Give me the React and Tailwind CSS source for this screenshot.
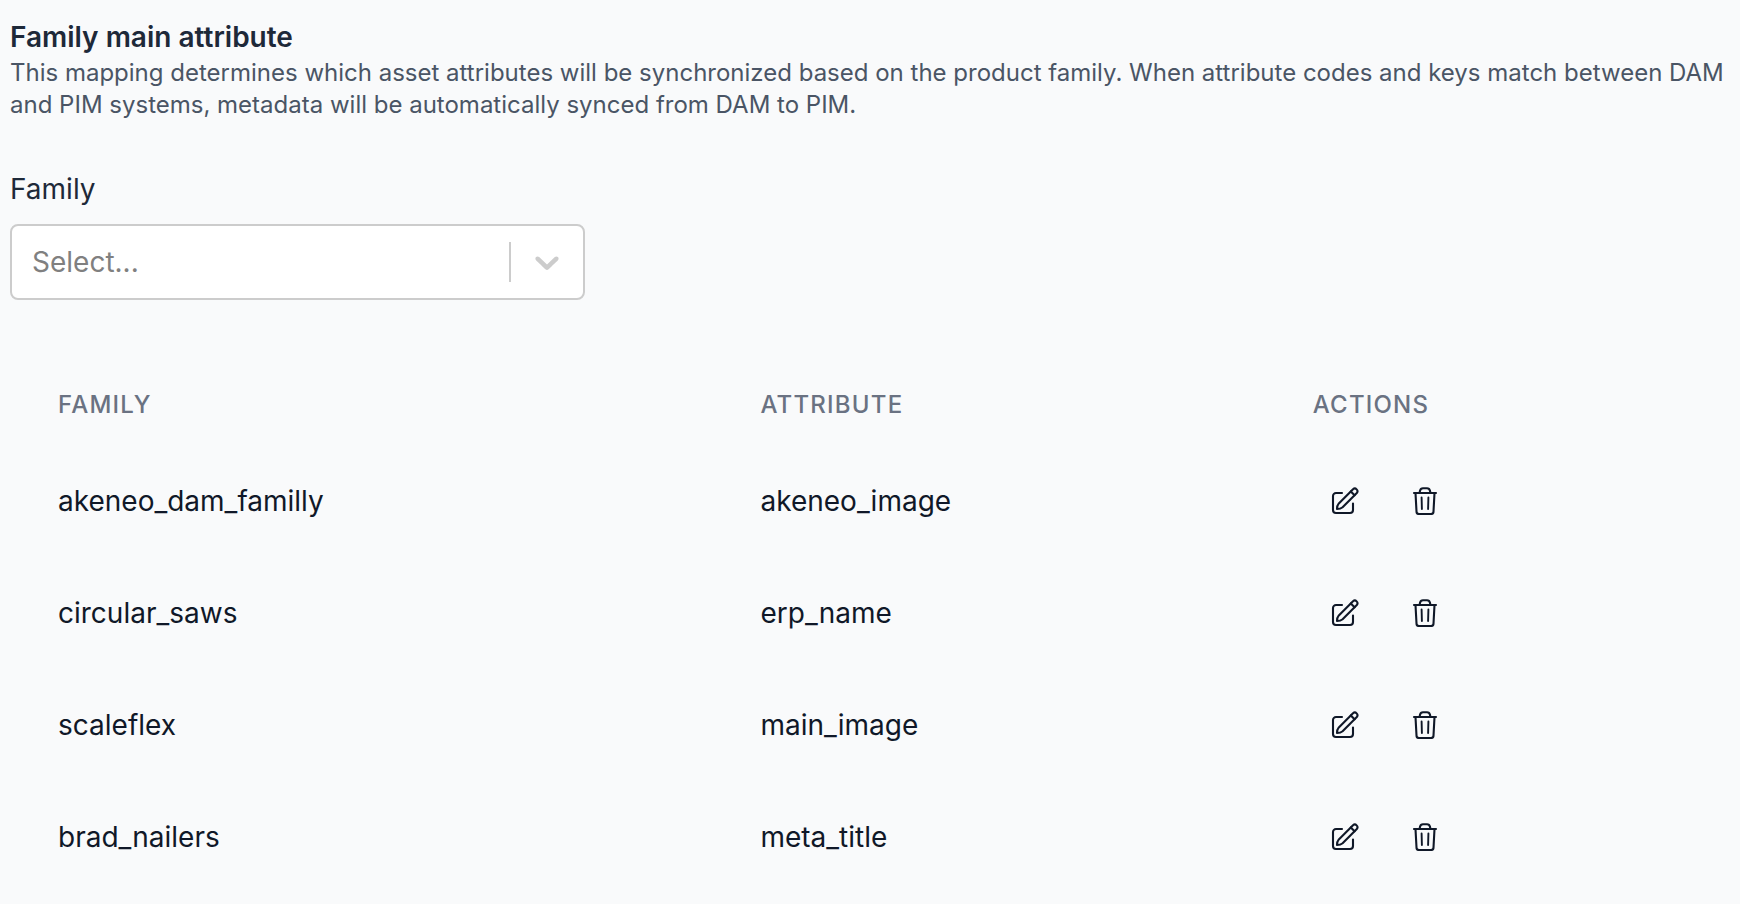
import React, { useState } from 'react';

const initialMappings = [
  { family: 'akeneo_dam_familly', attribute: 'akeneo_image' },
  { family: 'circular_saws', attribute: 'erp_name' },
  { family: 'scaleflex', attribute: 'main_image' },
  { family: 'brad_nailers', attribute: 'meta_title' }
];

function EditIcon() {
  return (
    <svg viewBox="0 0 28 28" className="h-7 w-7" fill="none" stroke="currentColor"
         strokeWidth="2.1" strokeLinecap="round" strokeLinejoin="round" aria-hidden="true">
      <path d="M11 6H5a3 3 0 0 0-3 3v14a3 3 0 0 0 3 3h14a3 3 0 0 0 3-3v-6.500" />
      <path d="M6 22c0-2 .4-4 1.800-5.600L22 2.200a2.700 2.700 0 0 1 3.800 3.800L11.600 20.200C10 21.600 8 22 6 22z" />
      <path d="M19.800 4.400l3.800 3.800" />
    </svg>
  );
}

function TrashIcon() {
  return (
    <svg viewBox="0 0 28 28" className="h-7 w-7" fill="none" stroke="currentColor"
         strokeWidth="2.1" strokeLinecap="round" strokeLinejoin="round" aria-hidden="true">
      <path d="M3 6h22" />
      <path d="M8.500 6l.6-2.400A3 3 0 0 1 12 1.200h4a3 3 0 0 1 2.900 2.400L19.500 6" />
      <path d="M4.500 6l1 18.500a2.500 2.500 0 0 0 2.500 2.500h12a2.500 2.500 0 0 0 2.500-2.500l1-18.500" />
      <path d="M10.600 10.500l.3 11.500M17.400 10.500l-.3 11.500" strokeWidth="1.900" />
    </svg>
  );
}

export default function App() {
  const [mappings, setMappings] = useState(initialMappings);
  const [selected, setSelected] = useState('');

  // Load a row's family back into the select
  const handleEdit = (family) => {
    setSelected(family);
  };

  const handleDelete = (family) => {
    setMappings(prev => prev.filter(m => m.family !== family));
  };

  return (
    <main className="min-h-screen bg-gray-50 pt-[21px] pr-1 pl-2.5 font-['Inter','Liberation_Sans',sans-serif] text-gray-900">
      <h1 className="text-[28px] leading-8 font-semibold text-gray-800">Family main attribute</h1>
      <p className="mt-1 text-[24px] leading-8 text-gray-600">
        This mapping determines which asset attributes will be synchronized based on the product
        family. When attribute codes and keys match between DAM and PIM systems, metadata will be
        automatically synced from DAM to PIM.
      </p>

      <label htmlFor="family" className="mt-12 block text-[28px] leading-10 text-gray-800">Family</label>
      <div className="relative mt-[15px] w-1/3">
        <select id="family" value={selected} onChange={e => setSelected(e.target.value)}
                className="block h-19 w-full appearance-none rounded-lg border-2 border-[#cccccc] bg-white pr-20 pl-5 text-[28px] text-[#808080]">
          <option value="" disabled>Select...</option>
          {initialMappings.map(m => (
            <option key={m.family} value={m.family}>{m.family}</option>
          ))}
        </select>
        {/* Divider and chevron on top of the select */}
        <div className="pointer-events-none absolute inset-y-0 right-0 flex items-center">
          <span className="h-10 w-0.5 bg-[#cccccc]" />
          <svg viewBox="0 0 20 20" className="mr-[18px] ml-4 h-10 w-10" fill="#cccccc" aria-hidden="true">
            <path d="M4.516 7.548c0.436-0.446 1.043-0.481 1.576 0l3.908 3.747 3.908-3.747c0.533-0.481 1.141-0.446 1.574 0 0.436 0.445 0.408 1.197 0 1.615-0.406 0.418-4.695 4.502-4.695 4.502-0.217 0.223-0.502 0.335-0.787 0.335s-0.570-0.112-0.789-0.335c0 0-4.287-4.084-4.695-4.502s-0.436-1.170 0-1.615z" />
          </svg>
        </div>
      </div>

      <table className="mt-[65px] w-full table-fixed text-left">
        <thead>
          <tr className="h-20 text-[24px] text-gray-500 uppercase">
            <th className="w-[40.7%] px-12 font-medium tracking-wider">Family</th>
            <th className="w-[32%] px-12 font-medium tracking-wider">Attribute</th>
            <th className="px-12 font-medium tracking-wider">Actions</th>
          </tr>
        </thead>
        <tbody>
          {mappings.map(m => (
            <tr key={m.family} className="h-28 text-[28px]">
              <td className="px-12">{m.family}</td>
              <td className="px-12">{m.attribute}</td>
              <td className="px-12">
                <div className="flex gap-6 pl-1">
                  <button type="button" aria-label={`Edit ${m.family}`} className="p-3.5"
                          onClick={() => handleEdit(m.family)}>
                    <EditIcon />
                  </button>
                  <button type="button" aria-label={`Delete ${m.family}`} className="p-3.5"
                          onClick={() => handleDelete(m.family)}>
                    <TrashIcon />
                  </button>
                </div>
              </td>
            </tr>
          ))}
        </tbody>
      </table>
    </main>
  );
}
